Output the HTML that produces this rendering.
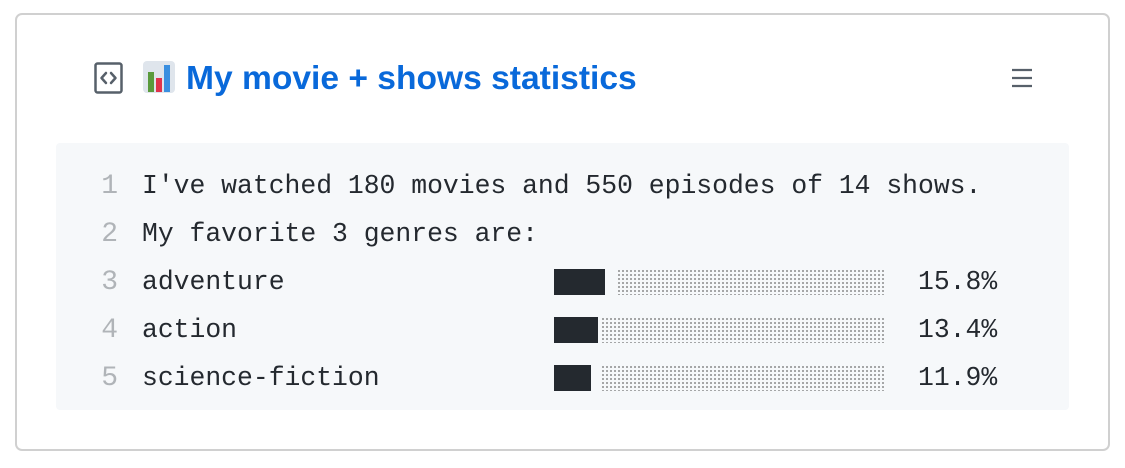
<!DOCTYPE html>
<html><head><style>
body{margin:0;width:1125px;height:468px;background:#fff;position:relative;overflow:hidden;font-family:"Liberation Sans",sans-serif}
.box{position:absolute;left:15px;top:13px;width:1095px;height:438px;border:2px solid #d0d0d0;border-radius:7px;box-sizing:border-box}
.title{position:absolute;left:186px;top:58px;font-size:33.6px;font-weight:bold;color:#0969da;line-height:42px;white-space:nowrap}
.code{position:absolute;left:56px;top:143px;width:1013px;height:267px;background:#f6f8fa;border-radius:4px}
.ln{position:absolute;width:62px;text-align:right;left:56px;color:#b0b4b8;font:28px "Liberation Mono",monospace}
.tx{position:absolute;left:142px;color:#24292f;font:26.4px "Liberation Mono",monospace;white-space:pre}
.dk{position:absolute;background:#24292f;height:26px}
.dt{position:absolute;height:26px;background-image:radial-gradient(circle,#666 0.9px,transparent 1.1px);background-size:4px 4px;opacity:.7}
</style></head><body>
<div class="box"></div>
<svg style="position:absolute;left:94px;top:62px" width="30" height="32" viewBox="0 0 30 32"><rect x="1.5" y="1.5" width="26" height="29" rx="2" fill="none" stroke="#57606a" stroke-width="2.5"/><path d="M12 11l-4.5 5 4.5 5M17 11l4.5 5-4.5 5" fill="none" stroke="#57606a" stroke-width="2.5" stroke-linecap="round" stroke-linejoin="round"/></svg>
<svg style="position:absolute;left:142px;top:60px" width="34" height="34" viewBox="0 0 34 34"><rect x="1" y="1" width="32" height="32" rx="4" fill="#dfe5ec"/><rect x="6" y="12" width="6" height="20" fill="#5a9a3c"/><rect x="14" y="18" width="6" height="14" fill="#e0334b"/><rect x="22" y="5" width="6" height="27" fill="#3a8fe0"/></svg>
<div class="title">My movie + shows statistics</div>
<svg style="position:absolute;left:1011px;top:68px" width="22" height="20"><path d="M1 2h20M1 10h20M1 18h20" stroke="#57606a" stroke-width="2.2"/></svg>
<div class="code"></div>
<div class="ln" style="top:171px">1</div><div class="tx" style="top:171px">I've watched 180 movies and 550 episodes of 14 shows.</div>
<div class="ln" style="top:219px">2</div><div class="tx" style="top:219px">My favorite 3 genres are:</div>
<div class="ln" style="top:267px">3</div><div class="tx" style="top:267px">adventure</div><div class="tx" style="top:267px;left:918px">15.8%</div>
<div class="ln" style="top:315px">4</div><div class="tx" style="top:315px">action</div><div class="tx" style="top:315px;left:918px">13.4%</div>
<div class="ln" style="top:363px">5</div><div class="tx" style="top:363px">science-fiction</div><div class="tx" style="top:363px;left:918px">11.9%</div>
<div class="dk" style="left:554px;top:269px;width:51px"></div><div class="dt" style="left:617px;top:269px;width:268px"></div>
<div class="dk" style="left:554px;top:317px;width:44px"></div><div class="dt" style="left:601px;top:317px;width:284px"></div>
<div class="dk" style="left:554px;top:365px;width:37px"></div><div class="dt" style="left:601px;top:365px;width:284px"></div>
</body></html>
